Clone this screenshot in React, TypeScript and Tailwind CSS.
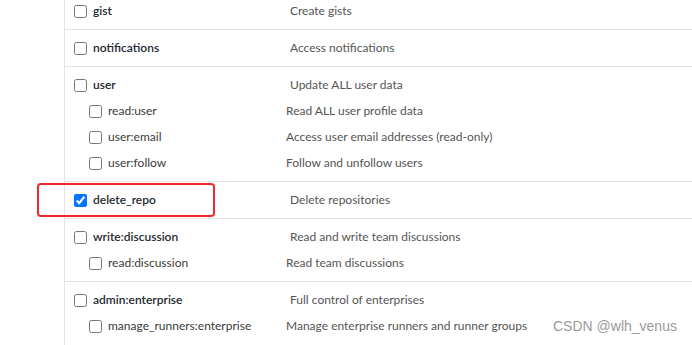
import React from 'react'

type Scope = { name: string; desc: string; checked?: boolean }
type Group = { main: Scope; subs: Scope[] }

const groups: Group[] = [
  { main: { name: 'gist', desc: 'Create gists' }, subs: [] },
  { main: { name: 'notifications', desc: 'Access notifications' }, subs: [] },
  {
    main: { name: 'user', desc: 'Update ALL user data' },
    subs: [
      { name: 'read:user', desc: 'Read ALL user profile data' },
      { name: 'user:email', desc: 'Access user email addresses (read-only)' },
      { name: 'user:follow', desc: 'Follow and unfollow users' },
    ],
  },
  { main: { name: 'delete_repo', desc: 'Delete repositories', checked: true }, subs: [] },
  {
    main: { name: 'write:discussion', desc: 'Read and write team discussions' },
    subs: [{ name: 'read:discussion', desc: 'Read team discussions' }],
  },
  {
    main: { name: 'admin:enterprise', desc: 'Full control of enterprises' },
    subs: [
      { name: 'manage_runners:enterprise', desc: 'Manage enterprise runners and runner groups' },
      // next row is cut off by the bottom edge, only its checkbox peeks in
      { name: '', desc: '' },
    ],
  },
]

function Row({ scope, sub }: { scope: Scope; sub?: boolean }) {
  return (
    <div className="flex h-[26px] items-center">
      <label className={`flex items-center ${sub ? 'w-[221px] pl-[24px]' : 'w-[225px] pl-[9px]'}`}>
        <input
          type="checkbox"
          defaultChecked={scope.checked}
          className="m-0 h-[13px] w-[13px] accent-[#0075ff]"
        />
        <span className={sub ? 'ml-[6px] text-[#3a3a3a]' : 'ml-[6px] font-semibold text-[#24292f]'}>
          {scope.name}
        </span>
      </label>
      <span className="text-[#555]">{scope.desc}</span>
    </div>
  )
}

export default function App() {
  return (
    <div className="relative h-[345px] w-[692px] overflow-hidden bg-white font-['Lato',sans-serif] text-[12px]">
      <div className="ml-[64px] -mt-[7px] border-l border-[#e1e4e8]">
        {groups.map((g) => (
          <div key={g.main.name} className="border-b border-[#e1e4e8] pt-[5px] pb-[5px]">
            <Row scope={g.main} />
            {g.subs.map((s, i) => (
              <Row key={i} scope={s} sub />
            ))}
          </div>
        ))}
      </div>

      {/* highlight box */}
      <div className="absolute left-[37px] top-[183px] h-[34px] w-[178px] rounded-[4px] border-2 border-[#f0282d]" />

      {/* watermark */}
      <div className="absolute left-[553px] top-[316px] font-['Liberation_Sans',sans-serif] text-[14px] text-[#9a9a9a]">
        CSDN @wlh_venus
      </div>
    </div>
  )
}
